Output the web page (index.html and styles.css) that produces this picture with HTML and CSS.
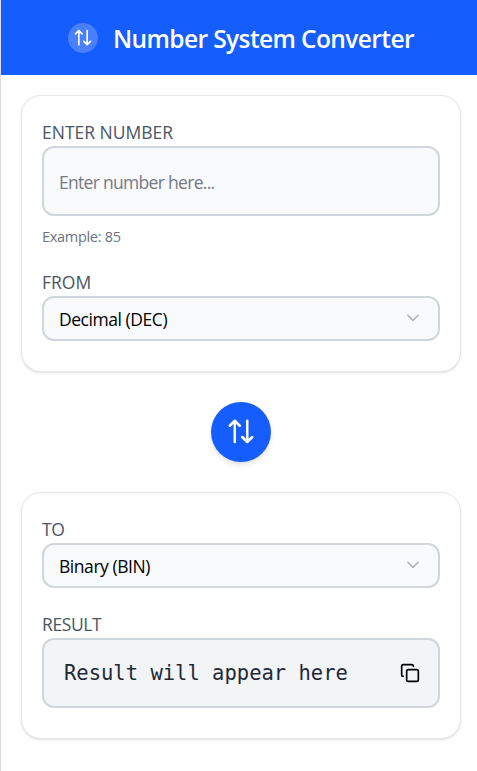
FILE: index.html
```html
<!DOCTYPE html>
<html lang="en">
<head>
<meta charset="utf-8">
<title>Number System Converter</title>
<link rel="stylesheet" href="styles.css">
</head>
<body>
<div class="app">
  <header class="header">
    <span class="logo">
      <svg width="20" height="20" viewBox="0 0 24 24"><path d="M3 7l4-4 4 4M7 3v17M21 16l-4 4-4-4M17 20V3"/></svg>
    </span>
    <h1 class="title">Number System Converter</h1>
  </header>
  <main class="main">
    <section class="card">
      <label class="label enter-label" for="number">ENTER NUMBER</label>
      <input class="field number" id="number" type="text" placeholder="Enter number here...">
      <p class="hint">Example: 85</p>
      <div class="label from-label">FROM</div>
      <button class="field select" type="button">
        <span>Decimal (DEC)</span>
        <svg class="chevron" width="20" height="20" viewBox="0 0 20 20"><path d="M4.800 7.200l5.200 5.200 5.200-5.200"/></svg>
      </button>
    </section>
    <button class="swap" type="button" aria-label="Swap">
      <svg width="30" height="30" viewBox="0 0 24 24"><path d="M3 7l4-4 4 4M7 3v17M21 16l-4 4-4-4M17 20V3"/></svg>
    </button>
    <section class="card">
      <div class="label">TO</div>
      <button class="field select" type="button">
        <span>Binary (BIN)</span>
        <svg class="chevron" width="20" height="20" viewBox="0 0 20 20"><path d="M4.800 7.200l5.200 5.200 5.200-5.200"/></svg>
      </button>
      <div class="label result-label">RESULT</div>
      <div class="field result">
        <output class="value">Result will appear here</output>
        <svg class="copy" width="20" height="20" viewBox="0 0 24 24"><rect x="8" y="8" width="14" height="14" rx="2"/><path d="M4 16c-1.100 0-2-.9-2-2V4c0-1.100.9-2 2-2h10c1.100 0 2 .9 2 2"/></svg>
      </div>
    </section>
  </main>
</div>
</body>
</html>
```
FILE: styles.css
```css
* { box-sizing: border-box; }
body {
  margin: 0;
  background: #fff;
  font-family: "Open Sans", "Noto Sans", sans-serif;
  font-size: 17.5px;
}
svg {
  display: block;
  flex: none;
  fill: none;
  stroke: currentColor;
  stroke-width: 2;
  stroke-linecap: round;
  stroke-linejoin: round;
}
.app {
  height: 771px;
  border-left: 1px solid #d8dae3;
}
.header {
  display: flex;
  align-items: center;
  justify-content: flex-start;
  gap: 15px;
  height: 75px;
  padding-left: 67px;
  background: #155dfc;
  color: #fff;
}
.logo {
  display: grid;
  place-items: center;
  width: 30px;
  height: 30px;
  border-radius: 50%;
  background: #4880fd;
}
.title {
  margin: 0;
  padding-top: 2px;
  font-size: 24.5px;
  font-weight: 600;
  line-height: 34px;
  letter-spacing: -0.6px;
  white-space: nowrap;
}
.main {
  display: flex;
  flex-direction: column;
  align-items: center;
  gap: 30px;
  padding: 20px 16px 0 20px;
}
.card {
  width: 440px;
  padding: 23px 20px 30px;
  border: 1px solid #e5e7eb;
  border-radius: 20px;
  background: #fff;
  box-shadow: 0 1px 3px rgba(0, 0, 0, .1), 0 1px 2px -1px rgba(0, 0, 0, .1);
}
.label {
  display: block;
  height: 27px;
  line-height: 27px;
  letter-spacing: -0.4px;
  color: #4a5565;
}
.enter-label { letter-spacing: 0; }
.field {
  display: flex;
  align-items: center;
  justify-content: space-between;
  width: 100%;
  border: 2px solid #d1d5dc;
  border-radius: 12px;
  background: #f9fafb;
  color: #000;
  font: inherit;
  text-align: left;
}
.number {
  height: 70px;
  padding: 1px 15px 0;
  letter-spacing: -0.7px;
  outline: 0;
}
.number::placeholder { color: #757983; opacity: 1; }
.hint {
  height: 21px;
  margin: 10px 0 0;
  font-size: 14.5px;
  line-height: 21px;
  letter-spacing: -0.3px;
  color: #6a7282;
}
.from-label {
  margin-top: 22px;
  letter-spacing: 0;
}
.select {
  height: 45px;
  padding: 1px 15px 0;
  letter-spacing: -0.45px;
}
.chevron {
  color: #adb0bb;
  stroke-width: 1.5;
  margin-top: -3px;
}
.swap {
  display: grid;
  place-items: center;
  width: 60px;
  height: 60px;
  padding: 0;
  border: 0;
  border-radius: 50%;
  background: #155dfc;
  color: #fff;
  box-shadow: 0 4px 6px -1px rgba(0, 0, 0, .1), 0 2px 4px -2px rgba(0, 0, 0, .1);
}
.result-label { margin-top: 23px; }
.result {
  height: 70px;
  padding: 0 18px 0 20px;
  background: #f3f4f6;
}
.value {
  font-family: "DejaVu Sans Mono", monospace;
  font-size: 20.5px;
  color: #1e2939;
  white-space: nowrap;
}
```
